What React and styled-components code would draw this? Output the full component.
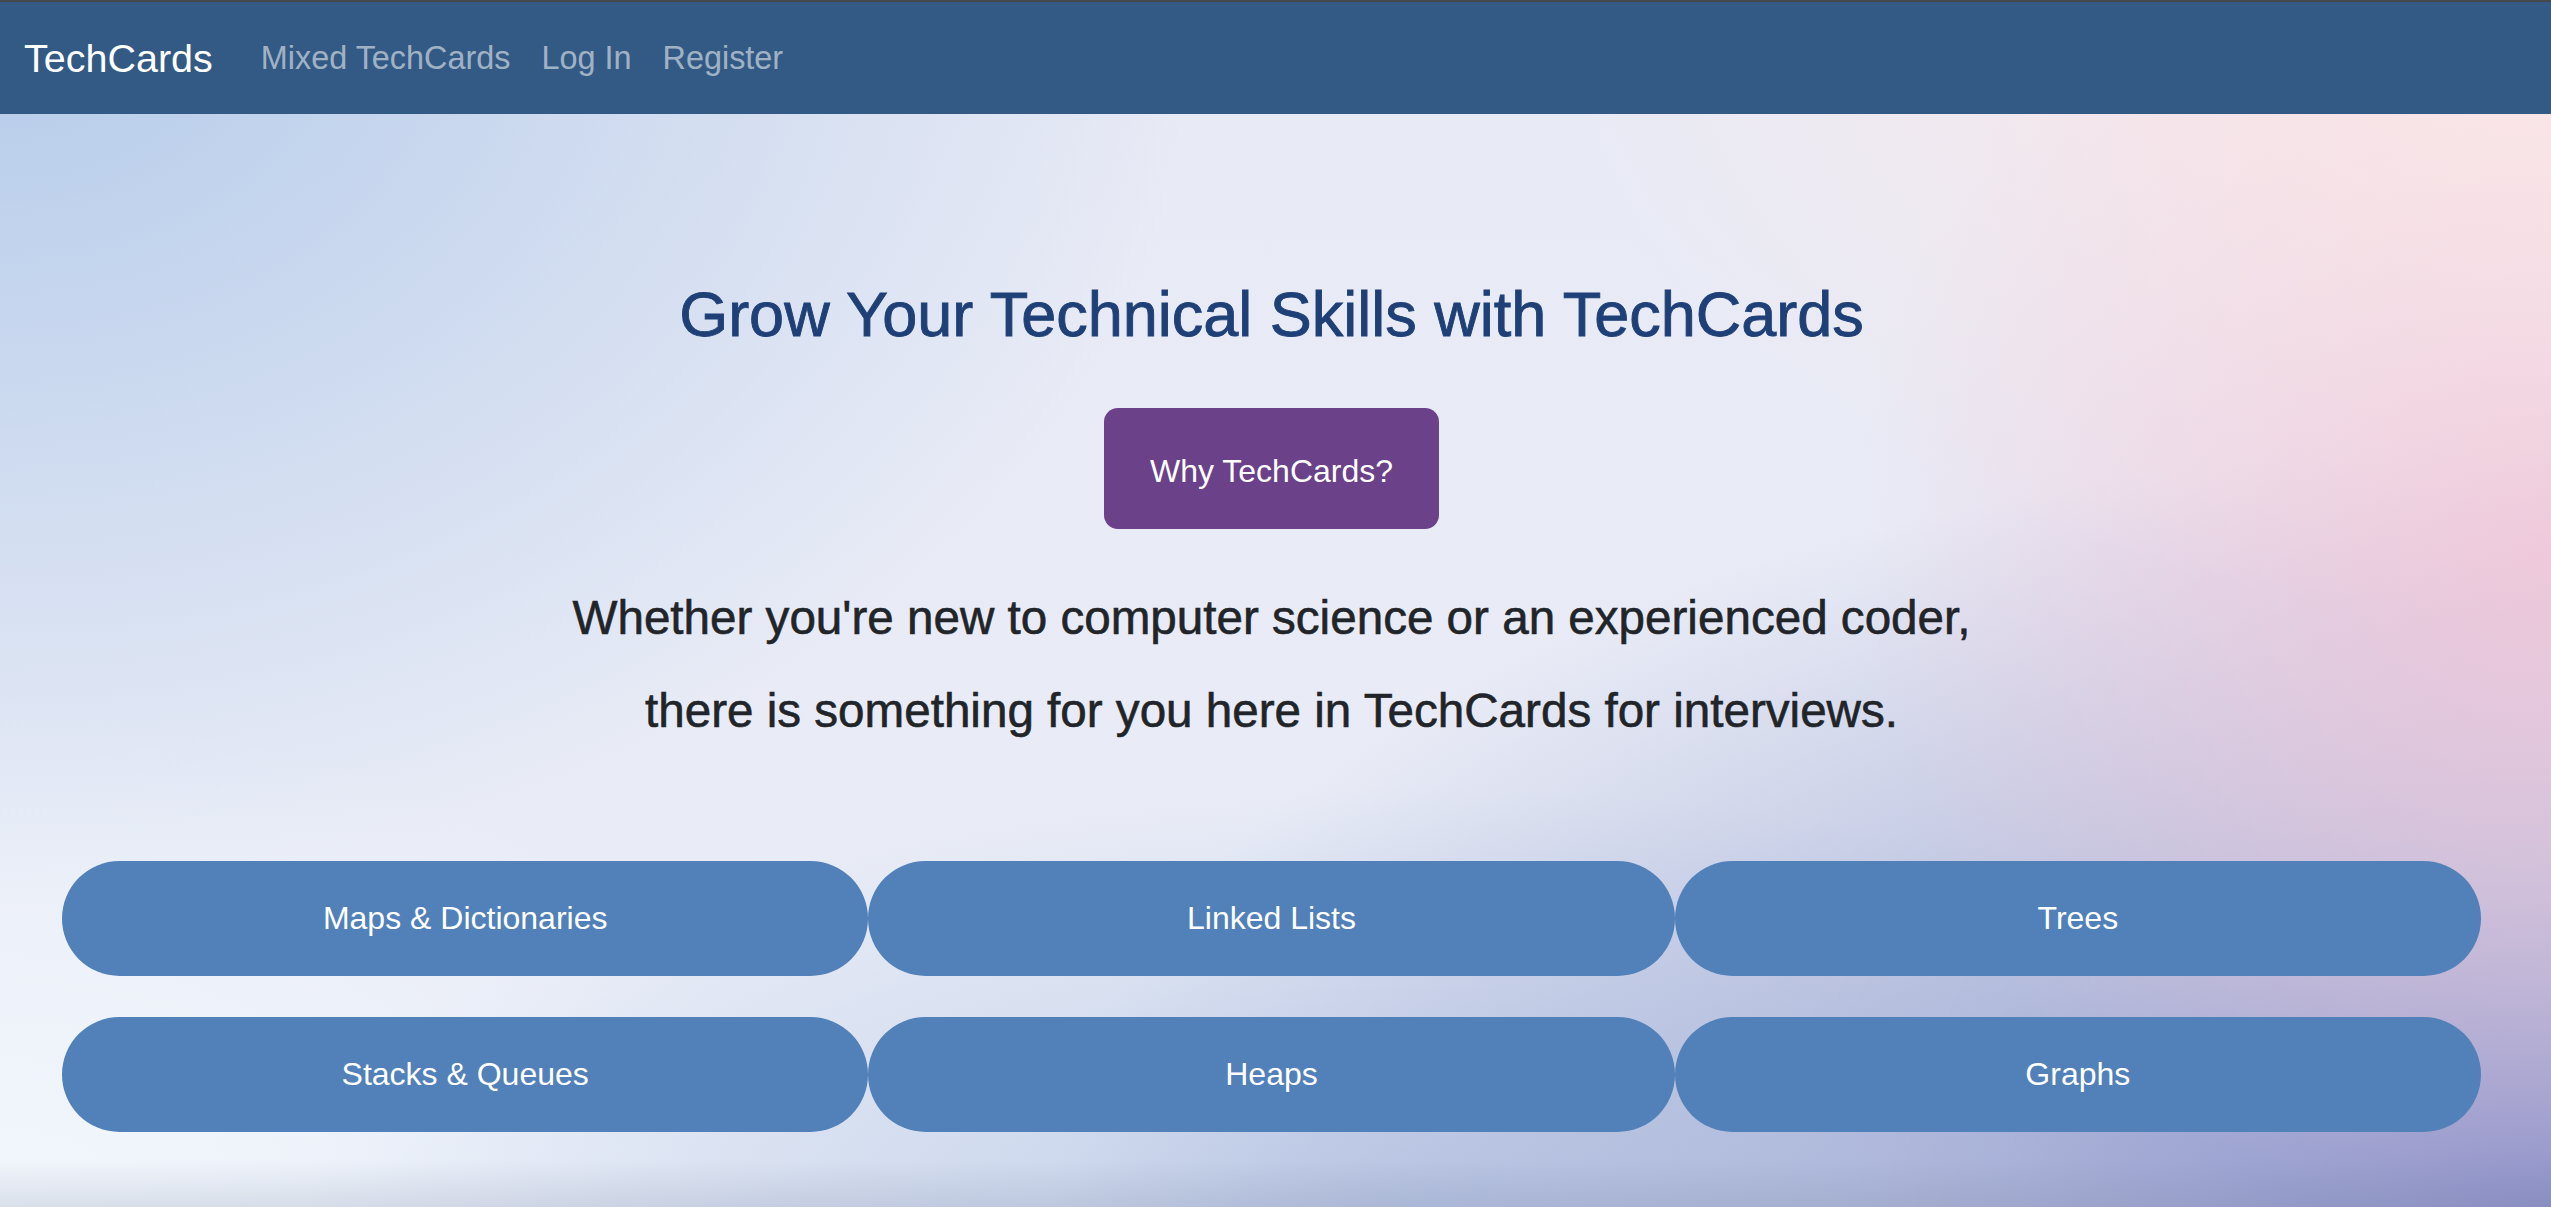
import React from "react";
import styled, { createGlobalStyle } from "styled-components";

const GlobalStyle = createGlobalStyle`
  html, body {
    margin: 0;
    padding: 0;
  }
  body {
    font-family: "Liberation Sans", Arial, sans-serif;
    overflow: hidden;
  }
  * { box-sizing: border-box; }
`;

const Page = styled.div`
  min-height: 1207px;
  display: flex;
  flex-direction: column;
  background:
    linear-gradient(180deg, rgba(120, 130, 160, 0) 0px, rgba(120, 130, 160, 0) 1160px, rgba(120, 130, 160, 0.2) 1207px),
    radial-gradient(ellipse 1000px 620px at 100% 0%, rgba(253, 230, 230, 1), rgba(253, 230, 230, 0)),
    radial-gradient(ellipse 700px 700px at 100% 45%, rgba(238, 196, 216, 0.95), rgba(238, 196, 216, 0)),
    radial-gradient(ellipse 1500px 760px at 100% 100%, rgba(136, 142, 200, 1), rgba(150, 160, 205, 0.6) 45%, rgba(170, 180, 215, 0)),
    radial-gradient(ellipse 1100px 420px at 55% 100%, rgba(190, 205, 232, 0.9), rgba(190, 205, 232, 0)),
    radial-gradient(ellipse 1200px 900px at 0% 0%, rgba(180, 203, 234, 1), rgba(180, 203, 234, 0)),
    radial-gradient(ellipse 800px 500px at 0% 100%, rgba(242, 247, 253, 1), rgba(242, 247, 253, 0)),
    linear-gradient(180deg, #e8eaf5 0%, #e9edf7 100%);
`;

const Navbar = styled.nav`
  height: 114px;
  flex: none;
  border-top: 2px solid #45484c;
  background: #335a84;
  display: flex;
  align-items: center;
  padding: 0 24px;
`;

const Brand = styled.a`
  color: #ffffff;
  font-size: 39.5px;
  text-decoration: none;
  margin-right: 48px;
`;

const NavLinks = styled.div`
  display: flex;
  align-items: center;
  gap: 31px;
`;

const NavLink = styled.a`
  color: rgba(255, 255, 255, 0.55);
  font-size: 32.4px;
  text-decoration: none;
`;

const Hero = styled.main`
  display: flex;
  flex-direction: column;
  align-items: center;
  padding: 163px 8px 0 0;
`;

const Title = styled.h1`
  margin: 0;
  font-size: 63px;
  line-height: 74px;
  font-weight: 400;
  color: #1f4077;
  -webkit-text-stroke: 0.9px #1f4077;
`;

const WhyButton = styled.button`
  margin-top: 57px;
  width: 335px;
  height: 121px;
  border: none;
  border-radius: 14px;
  background: #6b418a;
  color: #ffffff;
  font-family: "Liberation Sans", Arial, sans-serif;
  font-size: 32px;
  padding-top: 6px;
  cursor: pointer;
`;

const Intro = styled.p`
  margin: 42px 0 0;
  text-align: center;
  font-size: 47.6px;
  line-height: 93px;
  color: #212529;
  -webkit-text-stroke: 0.6px #212529;
`;

const TopicGrid = styled.div`
  margin-top: 104px;
  display: grid;
  grid-template-columns: repeat(3, 1fr);
  row-gap: 41px;
  padding: 0 70px 0 62px;
`;

const TopicPill = styled.button`
  height: 115px;
  border: none;
  border-radius: 58px;
  background: #5181b8;
  color: #ffffff;
  font-family: "Liberation Sans", Arial, sans-serif;
  font-size: 32px;
  cursor: pointer;
`;

const topics = [
  "Maps & Dictionaries",
  "Linked Lists",
  "Trees",
  "Stacks & Queues",
  "Heaps",
  "Graphs",
];

export default function App() {
  return (
    <>
      <GlobalStyle />
      <Page>
        <Navbar>
          <Brand href="#">TechCards</Brand>
          <NavLinks>
            <NavLink href="#">Mixed TechCards</NavLink>
            <NavLink href="#">Log In</NavLink>
            <NavLink href="#">Register</NavLink>
          </NavLinks>
        </Navbar>
        <Hero>
          <Title>Grow Your Technical Skills with TechCards</Title>
          <WhyButton>Why TechCards?</WhyButton>
          <Intro>
            Whether you're new to computer science or an experienced coder,
            <br />
            there is something for you here in TechCards for interviews.
          </Intro>
        </Hero>
        <TopicGrid>
          {topics.map((t) => (
            <TopicPill key={t}>{t}</TopicPill>
          ))}
        </TopicGrid>
      </Page>
    </>
  );
}
